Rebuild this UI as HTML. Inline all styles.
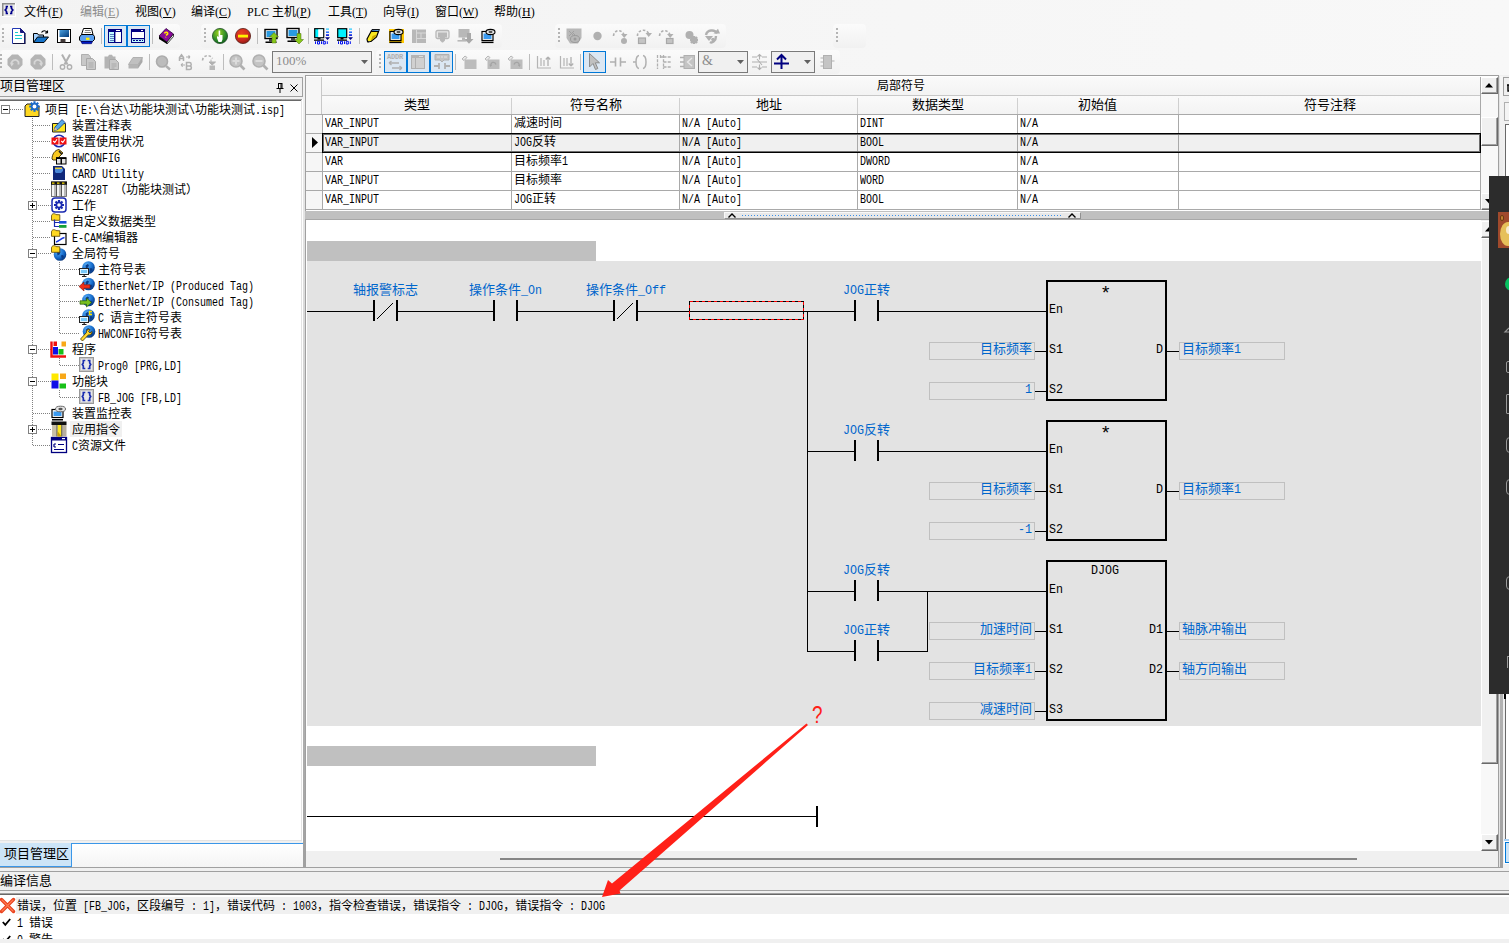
<!DOCTYPE html>
<html lang="zh-CN"><head><meta charset="utf-8"><title>ISPSoft</title>
<style>
html,body{margin:0;padding:0}
body{width:1509px;height:943px;overflow:hidden;background:#f0f0f0;position:relative;
 font-family:"Liberation Mono","Noto Sans CJK SC",monospace;font-size:12px;color:#000}
.a{position:absolute;box-sizing:border-box}
.t{position:absolute;white-space:nowrap;font-family:"Liberation Mono","Noto Sans CJK SC",monospace;font-size:12px;line-height:16px;color:#000}
.t13{font-size:13px}
.l,.l13{display:inline-block;white-space:pre;transform-origin:0 50%}
.l{transform:scaleX(.83333)}
.l13{transform:scaleX(.89744)}
.m{position:absolute;white-space:nowrap;font-family:"Liberation Serif","Noto Sans CJK SC",serif;font-size:12px;line-height:16px;color:#000}
.m u{text-decoration:underline}
.b{color:#0066cc}
svg{overflow:visible}
</style></head>
<body>
<div class="a" style="left:0px;top:0px;width:1509px;height:75px;background:linear-gradient(to right,#f3f3f3,#f8f8f8);"></div>
<svg class="a" style="left:2px;top:3px;" width="14" height="14" viewBox="0 0 14 14"><rect x="0" y="0" width="14" height="14" fill="#fff"/><rect x="0" y="0" width="13" height="13" fill="#8c8c8c"/><rect x="1.5" y="1.5" width="11.5" height="11.5" fill="#e9e9e9"/><path d="M6 3.5H4.5V5.5L3.2 7L4.5 8.5V10.5H6" fill="none" stroke="#00008c" stroke-width="1.7"/><path d="M8 3.5H9.5V5.5L10.8 7L9.5 8.5V10.5H8" fill="none" stroke="#00008c" stroke-width="1.7"/></svg>
<div class="m" style="left:24px;top:4px;color:#000">文件(<u>F</u>)</div>
<div class="m" style="left:80px;top:4px;color:#8c8c8c">编辑(<u>E</u>)</div>
<div class="m" style="left:135px;top:4px;color:#000">视图(<u>V</u>)</div>
<div class="m" style="left:191px;top:4px;color:#000">编译(<u>C</u>)</div>
<div class="m" style="left:247px;top:4px;color:#000">PLC 主机(<u>P</u>)</div>
<div class="m" style="left:328px;top:4px;color:#000">工具(<u>T</u>)</div>
<div class="m" style="left:383px;top:4px;color:#000">向导(<u>I</u>)</div>
<div class="m" style="left:435px;top:4px;color:#000">窗口(<u>W</u>)</div>
<div class="m" style="left:494px;top:4px;color:#000">帮助(<u>H</u>)</div>
<div class="a" style="left:0px;top:24px;width:180px;height:24px;background:linear-gradient(#fbfbfb,#f1f1f1);border-radius:4px;"></div>
<div class="a" style="left:201px;top:24px;width:301px;height:24px;background:linear-gradient(#fbfbfb,#f1f1f1);border-radius:4px;"></div>
<div class="a" style="left:555px;top:24px;width:171px;height:24px;background:linear-gradient(#fbfbfb,#f1f1f1);border-radius:4px;"></div>
<div class="a" style="left:833px;top:24px;width:33px;height:24px;background:linear-gradient(#fbfbfb,#f1f1f1);border-radius:4px;"></div>
<div class="a" style="left:0px;top:50px;width:374px;height:24px;background:linear-gradient(#fbfbfb,#f1f1f1);border-radius:4px;"></div>
<div class="a" style="left:376px;top:50px;width:464px;height:24px;background:linear-gradient(#fbfbfb,#f1f1f1);border-radius:4px;"></div>
<div class="a" style="left:2px;top:28px;width:2px;height:2px;background:#b4b4b4;"></div>
<div class="a" style="left:2px;top:32px;width:2px;height:2px;background:#b4b4b4;"></div>
<div class="a" style="left:2px;top:36px;width:2px;height:2px;background:#b4b4b4;"></div>
<div class="a" style="left:2px;top:40px;width:2px;height:2px;background:#b4b4b4;"></div>
<div class="a" style="left:204px;top:28px;width:2px;height:2px;background:#b4b4b4;"></div>
<div class="a" style="left:204px;top:32px;width:2px;height:2px;background:#b4b4b4;"></div>
<div class="a" style="left:204px;top:36px;width:2px;height:2px;background:#b4b4b4;"></div>
<div class="a" style="left:204px;top:40px;width:2px;height:2px;background:#b4b4b4;"></div>
<div class="a" style="left:558px;top:28px;width:2px;height:2px;background:#b4b4b4;"></div>
<div class="a" style="left:558px;top:32px;width:2px;height:2px;background:#b4b4b4;"></div>
<div class="a" style="left:558px;top:36px;width:2px;height:2px;background:#b4b4b4;"></div>
<div class="a" style="left:558px;top:40px;width:2px;height:2px;background:#b4b4b4;"></div>
<div class="a" style="left:836px;top:28px;width:2px;height:2px;background:#b4b4b4;"></div>
<div class="a" style="left:836px;top:32px;width:2px;height:2px;background:#b4b4b4;"></div>
<div class="a" style="left:836px;top:36px;width:2px;height:2px;background:#b4b4b4;"></div>
<div class="a" style="left:836px;top:40px;width:2px;height:2px;background:#b4b4b4;"></div>
<div class="a" style="left:0px;top:54px;width:2px;height:2px;background:#b4b4b4;"></div>
<div class="a" style="left:0px;top:58px;width:2px;height:2px;background:#b4b4b4;"></div>
<div class="a" style="left:0px;top:62px;width:2px;height:2px;background:#b4b4b4;"></div>
<div class="a" style="left:0px;top:66px;width:2px;height:2px;background:#b4b4b4;"></div>
<div class="a" style="left:379px;top:54px;width:2px;height:2px;background:#b4b4b4;"></div>
<div class="a" style="left:379px;top:58px;width:2px;height:2px;background:#b4b4b4;"></div>
<div class="a" style="left:379px;top:62px;width:2px;height:2px;background:#b4b4b4;"></div>
<div class="a" style="left:379px;top:66px;width:2px;height:2px;background:#b4b4b4;"></div>
<div class="a" style="left:101px;top:28px;width:1px;height:16px;background:#bdbdbd;"></div>
<div class="a" style="left:152px;top:28px;width:1px;height:16px;background:#bdbdbd;"></div>
<div class="a" style="left:257px;top:28px;width:1px;height:16px;background:#bdbdbd;"></div>
<div class="a" style="left:308px;top:28px;width:1px;height:16px;background:#bdbdbd;"></div>
<div class="a" style="left:359px;top:28px;width:1px;height:16px;background:#bdbdbd;"></div>
<div class="a" style="left:52px;top:54px;width:1px;height:16px;background:#bdbdbd;"></div>
<div class="a" style="left:149px;top:54px;width:1px;height:16px;background:#bdbdbd;"></div>
<div class="a" style="left:223px;top:54px;width:1px;height:16px;background:#bdbdbd;"></div>
<div class="a" style="left:455px;top:54px;width:1px;height:16px;background:#bdbdbd;"></div>
<div class="a" style="left:529px;top:54px;width:1px;height:16px;background:#bdbdbd;"></div>
<div class="a" style="left:580px;top:54px;width:1px;height:16px;background:#bdbdbd;"></div>
<div class="a" style="left:104px;top:25px;width:23px;height:22px;background:#dbe7f3;border:1px solid #0078d7;"></div>
<div class="a" style="left:127px;top:25px;width:23px;height:22px;background:#dbe7f3;border:1px solid #0078d7;"></div>
<div class="a" style="left:384px;top:51px;width:23px;height:22px;background:#dbe7f3;border:1px solid #0078d7;"></div>
<div class="a" style="left:407px;top:51px;width:23px;height:22px;background:#dbe7f3;border:1px solid #0078d7;"></div>
<div class="a" style="left:430px;top:51px;width:23px;height:22px;background:#dbe7f3;border:1px solid #0078d7;"></div>
<div class="a" style="left:583px;top:51px;width:23px;height:22px;background:#dbe7f3;border:1px solid #0078d7;"></div>
<svg class="a" style="left:11px;top:28px;" width="16" height="16" viewBox="0 0 16 16"><path d="M1.5 0.5H9.5L13.5 4.5V15.5H1.5Z" fill="#fff" stroke="#2138b4"/><path d="M9.5 0.5V4.5H13.5Z" fill="#1a1a80" stroke="#1a1a80"/><path d="M2 15.5H14V5" fill="none" stroke="#101040" stroke-width="1.2"/><path d="M4 4.5H7M4 7.5H11M4 10.5H11" stroke="#18c8d0" stroke-width="1" shape-rendering="crispEdges"/></svg>
<svg class="a" style="left:33px;top:28px;" width="16" height="16" viewBox="0 0 16 16"><path d="M0.5 14.5V5.5H4.5L5.5 7H10.5V9" fill="#a8d4ff" stroke="#000"/><path d="M0.5 14.5L4.5 9H15.5L11 14.5Z" fill="#1472c8" stroke="#000"/><path d="M8.5 4.5C10 2 13 2 14.5 5M14.5 5V2.5M14.5 5H12" fill="none" stroke="#000" stroke-width="1.1"/></svg>
<svg class="a" style="left:56px;top:28px;" width="16" height="16" viewBox="0 0 16 16"><rect x="1.5" y="1.5" width="13" height="13" fill="#fff" stroke="#000" stroke-width="1"/><defs><linearGradient id="gsv" x1="0" y1="0" x2="1" y2="1"><stop offset="0" stop-color="#4aa0e0"/><stop offset="1" stop-color="#003878"/></linearGradient></defs><rect x="3.5" y="2" width="9.5" height="7" fill="url(#gsv)"/><rect x="4.5" y="11" width="5" height="3.5" fill="#403838"/></svg>
<svg class="a" style="left:79px;top:28px;" width="16" height="16" viewBox="0 0 16 16"><path d="M4.5 0.5H12.5L14 6.5H2.5Z" fill="#fff" stroke="#000"/><path d="M6 2.5H11.5M5.5 4.5H12" stroke="#808080"/><path d="M0.5 9L2.5 6.5H14L15.5 8.5V11.5L13.5 13.5H2L0.5 12Z" fill="#5aa0f0" stroke="#000"/><path d="M2 13.5H13.5L12.5 15.7H3Z" fill="#0018c8" stroke="#000060" stroke-width="0.6"/><rect x="7" y="9.7" width="3.5" height="2.2" fill="#ffee00"/></svg>
<svg class="a" style="left:108px;top:29px;" width="14" height="14" viewBox="0 0 14 14"><rect x="0.5" y="0.5" width="13" height="13" fill="#fff" stroke="#000080"/><rect x="0" y="0" width="14" height="3" fill="#000080"/><rect x="8" y="1" width="4" height="1" fill="#fff"/><rect x="1" y="3" width="5" height="10" fill="#bffcff"/><rect x="6" y="3" width="1.4" height="10" fill="#000080"/><path d="M2.5 5.5H3.5M4.5 5.5H5.5M2.5 7.5H3.5M4.5 7.5H5.5M2.5 9.5H3.5M4.5 9.5H5.5M2.5 11.5H3.5M4.5 11.5H5.5" stroke="#000080"/></svg>
<svg class="a" style="left:131px;top:29px;" width="14" height="14" viewBox="0 0 14 14"><rect x="0.5" y="0.5" width="13" height="13" fill="#fff" stroke="#000080"/><rect x="0" y="0" width="14" height="3" fill="#000080"/><rect x="10" y="1" width="2" height="1" fill="#fff"/><rect x="1" y="10" width="12" height="3" fill="#bffcff"/><rect x="1" y="9" width="12" height="1.2" fill="#000080"/><path d="M2 11.5H4M5 11.5H7M8 11.5H10M11 11.5H12" stroke="#000080"/></svg>
<svg class="a" style="left:158px;top:28px;" width="16" height="16" viewBox="0 0 16 16"><path d="M1 8L8 0.5L15.5 6L9 14Z" fill="#8a0a9a" stroke="#300040" stroke-width="0.8"/><path d="M1 8V11L9 16V14Z" fill="#000"/><path d="M9 14L15.5 6V8.5L9 16Z" fill="#e8e8e8" stroke="#000" stroke-width="0.7"/><path d="M6.5 5.5C7 3.5 10.5 4 9.5 6.2L8 7.3M7.5 9.3L7.8 8.8" fill="none" stroke="#ffe800" stroke-width="1.6"/></svg>
<svg class="a" style="left:212px;top:28px;" width="16" height="16" viewBox="0 0 16 16"><defs><radialGradient id="ggr" cx="0.4" cy="0.3" r="0.8"><stop offset="0" stop-color="#9ad020"/><stop offset="0.6" stop-color="#2a8a28"/><stop offset="1" stop-color="#0a4a18"/></radialGradient></defs><circle cx="8" cy="8" r="7.6" fill="url(#ggr)" stroke="#24502a" stroke-width="0.8"/><path d="M6.6 2.5H8.2V7H10.5V11.5L9.5 14H6.5L5 10V8L6.6 9Z" fill="#fff"/></svg>
<svg class="a" style="left:235px;top:28px;" width="16" height="16" viewBox="0 0 16 16"><defs><radialGradient id="grd" cx="0.4" cy="0.3" r="0.8"><stop offset="0" stop-color="#e84020"/><stop offset="0.6" stop-color="#c82820"/><stop offset="1" stop-color="#7a1810"/></radialGradient></defs><circle cx="8" cy="8" r="7.6" fill="url(#grd)" stroke="#5a2018" stroke-width="0.8"/><rect x="3" y="6.7" width="10" height="2.8" fill="#fff000"/></svg>
<svg class="a" style="left:264px;top:28px;" width="16" height="16" viewBox="0 0 16 16"><rect x="1" y="1.5" width="12" height="9" fill="#fff" stroke="#000" stroke-width="1.4"/><rect x="2.5" y="3" width="9" height="6" fill="#2a9ae0"/><path d="M5 11H9V13.5H5Z" fill="#444"/><rect x="1.5" y="13.5" width="11" height="1.5" fill="#000"/><path d="M10 4.5L14.5 9H12V15H8V9H5.5Z" fill="#88c818" stroke="#486c10" stroke-width="0.5"/></svg>
<svg class="a" style="left:286px;top:27px;" width="16" height="16" viewBox="0 0 16 16"><rect x="1" y="1.5" width="12" height="9" fill="#fff" stroke="#000" stroke-width="1.4"/><rect x="2.5" y="3" width="9" height="6" fill="#2a9ae0"/><path d="M5 11H9V13.5H5Z" fill="#444"/><rect x="1.5" y="13.5" width="11" height="1.5" fill="#000"/><path d="M13 17L17.5 12.5H15V6.5H11V12.5H8.5Z" fill="#88c818" stroke="#486c10" stroke-width="0.5"/></svg>
<svg class="a" style="left:314px;top:28px;" width="16" height="16" viewBox="0 0 16 16"><rect x="0.7" y="0.7" width="9" height="9" fill="#00f0ff" stroke="#000" stroke-width="1.2"/><rect x="4.2" y="1.3" width="4.9" height="7.8" fill="#fff"/><path d="M3.5 10H6.5V11.5H3.5Z" fill="#000"/><rect x="0" y="11.5" width="10" height="1.3" fill="#000"/><rect x="12" y="0.5" width="3" height="1.2" fill="#20c8ff"/><rect x="12" y="3.5" width="3" height="1.4" fill="#1060ff"/><rect x="12" y="6.3" width="3" height="1.6" fill="#0018e0"/><path d="M11 9.3H16L13.5 12Z" fill="#000080"/><path d="M1.5 13.3V16M3.5 13.3H5.5V16H3.5ZM7.5 13.3V16M9.3 13.3H11.3V16H9.3ZM13.3 13.3V16" fill="none" stroke="#0010f0" stroke-width="1"/></svg>
<svg class="a" style="left:337px;top:28px;" width="16" height="16" viewBox="0 0 16 16"><rect x="0.7" y="0.7" width="9" height="9" fill="#00f0ff" stroke="#000" stroke-width="1.2"/><path d="M3.5 10H6.5V11.5H3.5Z" fill="#000"/><rect x="0" y="11.5" width="10" height="1.3" fill="#000"/><rect x="12" y="0.5" width="3" height="1.2" fill="#20c8ff"/><rect x="12" y="3.5" width="3" height="1.4" fill="#1060ff"/><rect x="12" y="6.3" width="3" height="1.6" fill="#0018e0"/><path d="M11 9.3H16L13.5 12Z" fill="#000080"/><path d="M1.5 13.3V16M3.5 13.3H5.5V16H3.5ZM7.5 13.3V16M9.3 13.3H11.3V16H9.3ZM13.3 13.3V16" fill="none" stroke="#0010f0" stroke-width="1"/></svg>
<svg class="a" style="left:366px;top:28px;" width="16" height="16" viewBox="0 0 16 16"><path d="M5 3L6 1.5H13.5L12.5 3.5Z" fill="#58a8f0" stroke="#000" stroke-width="0.9"/><path d="M5 3.5H12.5L10.5 9L5 13.5H1.5L1 11Z" fill="#f8e820" stroke="#000" stroke-width="1.2"/><path d="M6.5 8L10.5 6.5L9.5 9L5 12.5Z" fill="#c8a800"/><path d="M1.5 14.5L4 13.5" stroke="#444" stroke-width="1.3"/></svg>
<svg class="a" style="left:389px;top:28px;" width="16" height="16" viewBox="0 0 16 16"><rect x="0" y="1" width="15" height="14" fill="#ffc800"/><rect x="1" y="3.5" width="11" height="9" fill="#fff" stroke="#000" stroke-width="1.2"/><rect x="2.5" y="5.5" width="8" height="5.5" fill="#3a9af0"/><ellipse cx="9.5" cy="4" rx="4.5" ry="2.6" fill="#e8e8e8" stroke="#000" stroke-width="1.1"/><ellipse cx="9.5" cy="4" rx="2" ry="1.2" fill="#555"/><rect x="0.5" y="13.7" width="12" height="1.4" fill="#000"/></svg>
<svg class="a" style="left:481px;top:28px;" width="16" height="16" viewBox="0 0 16 16"><rect x="1" y="3.5" width="11" height="9" fill="#fff" stroke="#000" stroke-width="1.2"/><rect x="2.5" y="5.5" width="8" height="5.5" fill="#3a9af0"/><ellipse cx="9.5" cy="4" rx="4.5" ry="2.6" fill="#e8e8e8" stroke="#000" stroke-width="1.1"/><ellipse cx="9.5" cy="4" rx="2" ry="1.2" fill="#555"/><rect x="0.5" y="13.7" width="12" height="1.4" fill="#000"/></svg>
<svg class="a" style="left:412px;top:28px;" width="16" height="16" viewBox="0 0 16 16"><rect x="0" y="1.5" width="14" height="13.5" fill="#b8b8b8"/><path d="M4.5 1.5V15M4.5 5H14M4.5 10.5H14M9 5V10.5" stroke="#d8d8d8" stroke-width="1"/></svg>
<svg class="a" style="left:435px;top:28px;" width="16" height="16" viewBox="0 0 16 16"><rect x="1" y="2.5" width="13" height="8" rx="1.5" fill="#e8e8e8" stroke="#b8b8b8" stroke-width="1.3"/><path d="M3 4.5H12V9.5H10V12.5L8 14.5H7L5 12.5V9.5H3Z" fill="#b8b8b8"/></svg>
<svg class="a" style="left:457px;top:28px;" width="16" height="16" viewBox="0 0 16 16"><rect x="1.5" y="1" width="11" height="8.5" fill="#b8b8b8"/><path d="M5 9.5H8V12H5Z" fill="#b8b8b8"/><rect x="0.5" y="12" width="9" height="1.6" fill="#b8b8b8"/><path d="M10 5H14V11H16.5L12 15.8L7.5 11H10Z" fill="#a8a8a8"/></svg>
<svg class="a" style="left:566px;top:28px;" width="16" height="16" viewBox="0 0 16 16"><path d="M0.5 0.5H15.5V10L12 15.5H4L0.5 10Z" fill="#b8b8b8"/><ellipse cx="9" cy="11" rx="4.5" ry="3.5" fill="none" stroke="#9a9a9a" stroke-width="1"/><circle cx="9" cy="11" r="1.5" fill="#9a9a9a"/><path d="M3 3L8 8M8 3L3 8M6 4L10 8" stroke="#a0a0a0" stroke-width="1"/></svg>
<svg class="a" style="left:590px;top:28px;" width="16" height="16" viewBox="0 0 16 16"><circle cx="7.5" cy="8" r="4.2" fill="#b0b0b0"/></svg>
<svg class="a" style="left:612px;top:28px;" width="16" height="16" viewBox="0 0 16 16"><path d="M1.5 8C2 2 9 0.5 12 6.5" fill="none" stroke="#b0b0b0" stroke-width="1.6" stroke-dasharray="2.5 1.8"/><path d="M9 6H15.5L12.2 10Z" fill="#b0b0b0"/><circle cx="12" cy="13" r="3" fill="#b0b0b0"/></svg>
<svg class="a" style="left:636px;top:28px;" width="16" height="16" viewBox="0 0 16 16"><path d="M1.5 8C1 2 10 0 12.5 5.5" fill="none" stroke="#b0b0b0" stroke-width="1.6" stroke-dasharray="2.5 1.8"/><path d="M9.5 5H16L12.7 9Z" fill="#b0b0b0"/><rect x="2.5" y="10" width="7" height="5.5" fill="#c4c4c4" stroke="#a8a8a8" stroke-width="1.2"/></svg>
<svg class="a" style="left:658px;top:28px;" width="16" height="16" viewBox="0 0 16 16"><path d="M1.5 8C2 2 9 0.5 12 6.5" fill="none" stroke="#b0b0b0" stroke-width="1.6" stroke-dasharray="2.5 1.8"/><path d="M9 6H15.5L12.2 10Z" fill="#b0b0b0"/><rect x="8.5" y="10.5" width="6.5" height="5" fill="#c4c4c4" stroke="#a8a8a8" stroke-width="1.2"/></svg>
<svg class="a" style="left:684px;top:28px;" width="16" height="16" viewBox="0 0 16 16"><circle cx="5.5" cy="7" r="4" fill="#b0b0b0"/><path d="M7 9L13 15M13 9L7 15M6 12H14M10 8V16" stroke="#b0b0b0" stroke-width="2.4"/></svg>
<svg class="a" style="left:704px;top:28px;" width="16" height="16" viewBox="0 0 16 16"><path d="M2 7C3 1.5 11 1 13 5.5" fill="none" stroke="#b0b0b0" stroke-width="2.4"/><path d="M9.5 5.5H16L14 0.8Z" fill="#b0b0b0"/><path d="M1 8H9L5 13Z" fill="#b0b0b0"/><path d="M12 8C12 13 8 15.5 6 14" fill="none" stroke="#b0b0b0" stroke-width="2.4"/><circle cx="9" cy="11.5" r="1.8" fill="#b0b0b0"/></svg>
<svg class="a" style="left:7px;top:54px;" width="16" height="16" viewBox="0 0 16 16"><path d="M5 0.5H11L15.5 5V11L11 15.5H5L0.5 11V5Z" fill="#b4b4b4"/><g><path d="M5 11C3 6.5 9 4 11.5 8V10.5" fill="none" stroke="#d6d6d6" stroke-width="1.8"/><path d="M3 8.5L7 9.5L4.5 12.5Z" fill="#d6d6d6"/></g></svg>
<svg class="a" style="left:30px;top:54px;" width="16" height="16" viewBox="0 0 16 16"><path d="M5 0.5H11L15.5 5V11L11 15.5H5L0.5 11V5Z" fill="#b4b4b4"/><g transform="translate(16,0) scale(-1,1)"><path d="M5 11C3 6.5 9 4 11.5 8V10.5" fill="none" stroke="#d6d6d6" stroke-width="1.8"/><path d="M3 8.5L7 9.5L4.5 12.5Z" fill="#d6d6d6"/></g></svg>
<svg class="a" style="left:58px;top:54px;" width="16" height="16" viewBox="0 0 16 16"><path d="M4 0.5L9.5 10.5M12 0.5L6.5 10.5" stroke="#b0b0b0" stroke-width="2"/><circle cx="4.5" cy="13" r="2.2" fill="none" stroke="#b0b0b0" stroke-width="1.4"/><circle cx="11.5" cy="13" r="2.2" fill="none" stroke="#b0b0b0" stroke-width="1.4"/></svg>
<svg class="a" style="left:81px;top:54px;" width="16" height="16" viewBox="0 0 16 16"><path d="M0.5 0.5H7.5L9.5 3V11.5H0.5Z" fill="#c8c8c8" stroke="#b0b0b0"/><path d="M5.5 4.5H11.5L14.5 7.5V15.5H5.5Z" fill="#c8c8c8" stroke="#a8a8a8"/><path d="M7.5 9H12.5M7.5 11H12.5M7.5 13H12.5" stroke="#aaa"/></svg>
<svg class="a" style="left:104px;top:54px;" width="16" height="16" viewBox="0 0 16 16"><path d="M0.5 2.5H4L5 0.8H8L9 2.5H11.5V14.5H0.5Z" fill="#b4b4b4"/><path d="M5.5 5.5H11.5L14.5 8.5V15.5H5.5Z" fill="#c8c8c8" stroke="#a8a8a8"/><path d="M7.5 10H12.5M7.5 12H12.5M7.5 14H10.5" stroke="#aaa"/></svg>
<svg class="a" style="left:127px;top:54px;" width="16" height="16" viewBox="0 0 16 16"><path d="M6 3.5H15.5L11 10.5H1.5Z" fill="#c0c0c0" stroke="#b0b0b0"/><path d="M1.5 10.5H11V14.5H1.5Z" fill="#b4b4b4"/><path d="M11 10.5L15.5 3.5V8L11 14.5Z" fill="#a8a8a8"/></svg>
<svg class="a" style="left:155px;top:54px;" width="16" height="16" viewBox="0 0 16 16"><circle cx="7" cy="7.5" r="5.5" fill="#bcbcbc" stroke="#acacac" stroke-width="1.6"/><path d="M11 12L15 15.5" stroke="#b0b0b0" stroke-width="2.4"/></svg>
<svg class="a" style="left:178px;top:54px;" width="16" height="16" viewBox="0 0 16 16"><path d="M1.5 7V3.5L3.5 0.8L5.5 3.5V7M1.5 4.5H5.5" fill="none" stroke="#b0b0b0" stroke-width="1.5"/><path d="M8 3H12M12 3L10.5 1.5M12 3L10.5 4.5" fill="none" stroke="#b0b0b0" stroke-width="1.1"/><path d="M8.5 8.5V15.5H11.5C14 15.5 14 12 11.5 12C14 12 13.5 8.5 11.5 8.5ZM8.5 12H11.5" fill="none" stroke="#b0b0b0" stroke-width="1.5"/><path d="M7 11L3 11M3 11L4.7 9.3M3 11L4.7 12.7" fill="none" stroke="#b0b0b0" stroke-width="1.1"/></svg>
<svg class="a" style="left:201px;top:54px;" width="16" height="16" viewBox="0 0 16 16"><path d="M1.5 6.5C2 1 9 0 11.5 4.5" fill="none" stroke="#b0b0b0" stroke-width="1.6" stroke-dasharray="2.5 1.8"/><path d="M10 5.5V9M8 8H14.5L11.2 11Z" fill="#b0b0b0" stroke="#b0b0b0"/><rect x="8.5" y="11.5" width="5.5" height="4.5" fill="#b8b8b8"/></svg>
<svg class="a" style="left:229px;top:54px;" width="16" height="16" viewBox="0 0 16 16"><circle cx="7" cy="7" r="6" fill="#c4c4c4" stroke="#b0b0b0" stroke-width="1.6"/><path d="M11.5 11.5L15.5 15.5" stroke="#b0b0b0" stroke-width="2.6"/><path d="M3.5 7H10.5" stroke="#dcdcdc" stroke-width="2"/><path d="M7 3.5V10.5" stroke="#dcdcdc" stroke-width="2"/></svg>
<svg class="a" style="left:252px;top:54px;" width="16" height="16" viewBox="0 0 16 16"><circle cx="7" cy="7" r="6" fill="#c4c4c4" stroke="#b0b0b0" stroke-width="1.6"/><path d="M11.5 11.5L15.5 15.5" stroke="#b0b0b0" stroke-width="2.6"/><path d="M3.5 7H10.5" stroke="#dcdcdc" stroke-width="2"/></svg>
<div class="a" style="left:387px;top:53px;font:bold 7px/8px 'Liberation Mono',monospace;color:#b0b0b0;letter-spacing:-0.2px">ADDR</div>
<svg class="a" style="left:388px;top:60px;" width="16" height="12" viewBox="0 0 16 12"><path d="M1 3H11M1 3L3.5 1M1 3L3.5 5M14 8H4M14 8L11.5 6M14 8L11.5 10" fill="none" stroke="#b0b0b0" stroke-width="1.4"/></svg>
<svg class="a" style="left:411px;top:55px;" width="14" height="14" viewBox="0 0 14 14"><rect x="0.5" y="0.5" width="13" height="13" fill="#d0d0d0" stroke="#b0b0b0"/><rect x="0" y="0" width="14" height="3" fill="#b4b4b4"/><path d="M4.5 3V14" stroke="#b0b0b0"/><rect x="8" y="1" width="4" height="1" fill="#ddd"/></svg>
<svg class="a" style="left:434px;top:54px;" width="16" height="16" viewBox="0 0 16 16"><path d="M1 0.5H15V6H10L8 8L6 6H1Z" fill="#c4c4c4" stroke="#b0b0b0"/><path d="M3 3H6M7 3H9M10 3H13" stroke="#e4e4e4"/><path d="M0 12H5M11 12H16M5 9V15M11 9V15" stroke="#b0b0b0" stroke-width="1.8"/></svg>
<svg class="a" style="left:461px;top:54px;" width="16" height="16" viewBox="0 0 16 16"><rect x="3.5" y="5.5" width="12" height="9.5" fill="#bcbcbc"/><path d="M1 5L4 2L6 3.5L3 6.5Z" fill="#e8e8e8" stroke="#b0b0b0" stroke-width="0.9"/></svg>
<svg class="a" style="left:484px;top:54px;" width="16" height="16" viewBox="0 0 16 16"><rect x="3.5" y="5.5" width="12" height="9.5" fill="#bcbcbc"/><path d="M1 5L4 2L6 3.5L3 6.5Z" fill="#e8e8e8" stroke="#b0b0b0" stroke-width="0.9"/><path d="M7 12C6 8 11 7 12 10.5" fill="none" stroke="#a4a4a4" stroke-width="1.3"/><path d="M5.3 10.5L8 11L6.5 13Z" fill="#a4a4a4"/></svg>
<svg class="a" style="left:507px;top:54px;" width="16" height="16" viewBox="0 0 16 16"><rect x="3.5" y="5.5" width="12" height="9.5" fill="#bcbcbc"/><path d="M1 5L4 2L6 3.5L3 6.5Z" fill="#e8e8e8" stroke="#b0b0b0" stroke-width="0.9"/><path d="M12 12C13 8 8 7 7 10.5" fill="none" stroke="#a4a4a4" stroke-width="1.3"/><path d="M13.7 10.5L11 11L12.5 13Z" fill="#a4a4a4"/></svg>
<svg class="a" style="left:536px;top:54px;" width="16" height="16" viewBox="0 0 16 16"><path d="M1.5 2V14H15" fill="none" stroke="#b4b4b4" stroke-width="1.2"/><path d="M5 4V12M8 6V12" stroke="#b4b4b4" stroke-width="1.2"/><path d="M12 12V3M12 3L9.8 5.5M12 3L14.2 5.5" fill="none" stroke="#b0b0b0" stroke-width="1.3"/></svg>
<svg class="a" style="left:559px;top:54px;" width="16" height="16" viewBox="0 0 16 16"><path d="M1.5 2V14H15" fill="none" stroke="#b4b4b4" stroke-width="1.2"/><path d="M5 4V12M8 4V12" stroke="#b4b4b4" stroke-width="1.2"/><path d="M12 3V12M12 12L9.8 9.5M12 12L14.2 9.5" fill="none" stroke="#b0b0b0" stroke-width="1.3"/></svg>
<svg class="a" style="left:588px;top:53px;" width="13" height="18" viewBox="0 0 13 18"><path d="M1.5 0.5V14L5 10.5L7.5 16.5L9.8 15.5L7.3 9.8H11.5Z" fill="#c0c0c0" stroke="#8c8c8c" stroke-width="1"/></svg>
<svg class="a" style="left:610px;top:54px;" width="16" height="16" viewBox="0 0 16 16"><path d="M0 8H5.5M10.5 8H16M5.5 3.5V12.5M10.5 3.5V12.5" stroke="#b0b0b0" stroke-width="1.6"/></svg>
<svg class="a" style="left:633px;top:54px;" width="16" height="16" viewBox="0 0 16 16"><path d="M0 8H3M6 1.5C3 2 3 5 3 8S3 14 6 14.5M10 1.5C13 2 13 5 13 8S13 14 10 14.5" fill="none" stroke="#b0b0b0" stroke-width="1.5"/></svg>
<svg class="a" style="left:656px;top:54px;" width="16" height="16" viewBox="0 0 16 16"><path d="M1.5 1V15M4.5 1V5M7.5 1V15M4.5 3H7.5M7.5 3H15M7.5 8H15M7.5 13H15" fill="none" stroke="#b0b0b0" stroke-width="1.3" stroke-dasharray="3 1.2"/></svg>
<svg class="a" style="left:679px;top:54px;" width="16" height="16" viewBox="0 0 16 16"><rect x="5" y="1.5" width="10.5" height="13" fill="#c4c4c4" stroke="#b0b0b0"/><path d="M1 3.5H5M1 8H5M1 12.5H5" stroke="#b0b0b0" stroke-width="1.4"/><path d="M13 4L8.5 8L13 12" fill="none" stroke="#e8e8e8" stroke-width="1.4"/></svg>
<svg class="a" style="left:752px;top:54px;" width="16" height="16" viewBox="0 0 16 16"><path d="M0 3H5M10 3H15M0 8H15M0 13H5M10 13H15" stroke="#b0b0b0" stroke-width="1.2"/><path d="M7.5 0.5V5.5M7.5 10.5V15.5M5.5 2.5L7.5 0.5L9.5 2.5M5.5 13.5L7.5 15.5L9.5 13.5M5 5L10 11" fill="none" stroke="#b0b0b0" stroke-width="1.1"/></svg>
<svg class="a" style="left:820px;top:54px;" width="16" height="16" viewBox="0 0 16 16"><rect x="3.5" y="1.5" width="8" height="13" fill="#c4c4c4" stroke="#b0b0b0"/><path d="M0.5 4H3.5M0.5 8H3.5M0.5 12H3.5M11.5 7H14.5" stroke="#b0b0b0" stroke-width="1.2"/></svg>
<div class="a" style="left:272px;top:51px;width:100px;height:22px;background:#f0f0f0;border:1px solid #7a7a7a;"></div>
<svg class="a" style="left:361px;top:60px;" width="7" height="4" viewBox="0 0 7 4"><path d="M0 0H7L3.5 4Z" fill="#606060"/></svg>
<div class="m" style="left:276px;top:53px;color:#8c8c8c;font-size:13px">100%</div>
<div class="a" style="left:698px;top:51px;width:50px;height:22px;background:#f0f0f0;border:1px solid #7a7a7a;"></div>
<svg class="a" style="left:737px;top:60px;" width="7" height="4" viewBox="0 0 7 4"><path d="M0 0H7L3.5 4Z" fill="#606060"/></svg>
<div class="m" style="left:702px;top:53px;color:#8c8c8c;font-size:14px">&amp;</div>
<div class="a" style="left:771px;top:51px;width:44px;height:22px;background:#f0f0f0;border:1px solid #7a7a7a;"></div>
<svg class="a" style="left:804px;top:60px;" width="7" height="4" viewBox="0 0 7 4"><path d="M0 0H7L3.5 4Z" fill="#606060"/></svg>
<svg class="a" style="left:774px;top:54px;" width="15" height="16" viewBox="0 0 15 16"><path d="M7.5 1V15M0 9.5H15M3 5.5L7.5 1L12 5.5" fill="none" stroke="#000080" stroke-width="2"/></svg>
<div class="a" style="left:0px;top:77px;width:303px;height:1px;background:#a0a0a0;"></div>
<div class="a" style="left:302px;top:77px;width:1px;height:20px;background:#a0a0a0;"></div>
<div class="a" style="left:0px;top:96px;width:303px;height:1px;background:#a0a0a0;"></div>
<div class="t t13" style="left:0px;top:79px;">项目管理区</div>
<svg class="a" style="left:276px;top:83px;" width="8" height="10" viewBox="0 0 8 10"><path d="M2 0.5H6M2.5 0.5V5.5M5 0V5.5M6 0V5.5M0.5 5.5H7.5M4 6V10" fill="none" stroke="#000" stroke-width="1"/></svg>
<svg class="a" style="left:290px;top:84px;" width="8" height="8" viewBox="0 0 8 8"><path d="M0.5 0.5L7.5 7.5M7.5 0.5L0.5 7.5" stroke="#000" stroke-width="1"/></svg>
<div class="a" style="left:0px;top:99px;width:303px;height:1px;background:#a0a0a0;"></div>
<div class="a" style="left:0px;top:100px;width:302px;height:1px;background:#696969;"></div>
<div class="a" style="left:0px;top:101px;width:301px;height:739px;background:#fff;"></div>
<div class="a" style="left:301px;top:100px;width:1px;height:741px;background:#e3e3e3;"></div>
<div class="a" style="left:302px;top:99px;width:1px;height:743px;background:#fff;"></div>
<div class="a" style="left:0px;top:840px;width:302px;height:1px;background:#e3e3e3;"></div>
<div class="a" style="left:32px;top:118px;width:1px;height:328px;background:repeating-linear-gradient(to bottom,#808080 0 1px,transparent 1px 2px);"></div>
<div class="a" style="left:59px;top:262px;width:1px;height:72px;background:repeating-linear-gradient(to bottom,#808080 0 1px,transparent 1px 2px);"></div>
<div class="a" style="left:59px;top:358px;width:1px;height:8px;background:repeating-linear-gradient(to bottom,#808080 0 1px,transparent 1px 2px);"></div>
<div class="a" style="left:59px;top:390px;width:1px;height:8px;background:repeating-linear-gradient(to bottom,#808080 0 1px,transparent 1px 2px);"></div>
<div class="a" style="left:10px;top:109px;width:14px;height:1px;background:repeating-linear-gradient(to right,#808080 0 1px,transparent 1px 2px);"></div>
<div class="a" style="left:1px;top:105px;width:9px;height:9px;background:#fff;border:1px solid #808080;"></div>
<div class="a" style="left:3px;top:109px;width:5px;height:1px;background:#000;"></div>
<div class="t" style="left:45px;top:103px;">项目<span class="l" style="margin-right:-6px"> [E:\</span>台达<span class="l" style="margin-right:-1.2px">\</span>功能块测试<span class="l" style="margin-right:-1.2px">\</span>功能块测试<span class="l" style="margin-right:-6px">.isp]</span></div>
<div class="a" style="left:33px;top:125px;width:18px;height:1px;background:repeating-linear-gradient(to right,#808080 0 1px,transparent 1px 2px);"></div>
<div class="t" style="left:72px;top:119px;">装置注释表</div>
<div class="a" style="left:33px;top:141px;width:18px;height:1px;background:repeating-linear-gradient(to right,#808080 0 1px,transparent 1px 2px);"></div>
<div class="t" style="left:72px;top:135px;">装置使用状况</div>
<div class="a" style="left:33px;top:157px;width:18px;height:1px;background:repeating-linear-gradient(to right,#808080 0 1px,transparent 1px 2px);"></div>
<div class="t" style="left:72px;top:151px;"><span class="l" style="margin-right:-9.6px">HWCONFIG</span></div>
<div class="a" style="left:33px;top:173px;width:18px;height:1px;background:repeating-linear-gradient(to right,#808080 0 1px,transparent 1px 2px);"></div>
<div class="t" style="left:72px;top:167px;"><span class="l" style="margin-right:-14.4px">CARD Utility</span></div>
<div class="a" style="left:33px;top:189px;width:18px;height:1px;background:repeating-linear-gradient(to right,#808080 0 1px,transparent 1px 2px);"></div>
<div class="t" style="left:72px;top:183px;"><span class="l" style="margin-right:-8.4px">AS228T </span>（功能块测试）</div>
<div class="a" style="left:38px;top:205px;width:13px;height:1px;background:repeating-linear-gradient(to right,#808080 0 1px,transparent 1px 2px);"></div>
<div class="a" style="left:28px;top:201px;width:9px;height:9px;background:#fff;border:1px solid #808080;"></div>
<div class="a" style="left:30px;top:205px;width:5px;height:1px;background:#000;"></div>
<div class="a" style="left:32px;top:203px;width:1px;height:5px;background:#000;"></div>
<div class="t" style="left:72px;top:199px;">工作</div>
<div class="a" style="left:33px;top:221px;width:18px;height:1px;background:repeating-linear-gradient(to right,#808080 0 1px,transparent 1px 2px);"></div>
<div class="t" style="left:72px;top:215px;">自定义数据类型</div>
<div class="a" style="left:33px;top:237px;width:18px;height:1px;background:repeating-linear-gradient(to right,#808080 0 1px,transparent 1px 2px);"></div>
<div class="t" style="left:72px;top:231px;"><span class="l" style="margin-right:-6px">E-CAM</span>编辑器</div>
<div class="a" style="left:38px;top:253px;width:13px;height:1px;background:repeating-linear-gradient(to right,#808080 0 1px,transparent 1px 2px);"></div>
<div class="a" style="left:28px;top:249px;width:9px;height:9px;background:#fff;border:1px solid #808080;"></div>
<div class="a" style="left:30px;top:253px;width:5px;height:1px;background:#000;"></div>
<div class="t" style="left:72px;top:247px;">全局符号</div>
<div class="a" style="left:60px;top:269px;width:19px;height:1px;background:repeating-linear-gradient(to right,#808080 0 1px,transparent 1px 2px);"></div>
<div class="t" style="left:98px;top:263px;">主符号表</div>
<div class="a" style="left:60px;top:285px;width:19px;height:1px;background:repeating-linear-gradient(to right,#808080 0 1px,transparent 1px 2px);"></div>
<div class="t" style="left:98px;top:279px;"><span class="l" style="margin-right:-31.2px">EtherNet/IP (Produced Tag)</span></div>
<div class="a" style="left:60px;top:301px;width:19px;height:1px;background:repeating-linear-gradient(to right,#808080 0 1px,transparent 1px 2px);"></div>
<div class="t" style="left:98px;top:295px;"><span class="l" style="margin-right:-31.2px">EtherNet/IP (Consumed Tag)</span></div>
<div class="a" style="left:60px;top:317px;width:19px;height:1px;background:repeating-linear-gradient(to right,#808080 0 1px,transparent 1px 2px);"></div>
<div class="t" style="left:98px;top:311px;"><span class="l" style="margin-right:-2.4px">C </span>语言主符号表</div>
<div class="a" style="left:60px;top:333px;width:19px;height:1px;background:repeating-linear-gradient(to right,#808080 0 1px,transparent 1px 2px);"></div>
<div class="t" style="left:98px;top:327px;"><span class="l" style="margin-right:-9.6px">HWCONFIG</span>符号表</div>
<div class="a" style="left:38px;top:349px;width:13px;height:1px;background:repeating-linear-gradient(to right,#808080 0 1px,transparent 1px 2px);"></div>
<div class="a" style="left:28px;top:345px;width:9px;height:9px;background:#fff;border:1px solid #808080;"></div>
<div class="a" style="left:30px;top:349px;width:5px;height:1px;background:#000;"></div>
<div class="t" style="left:72px;top:343px;">程序</div>
<div class="a" style="left:60px;top:365px;width:19px;height:1px;background:repeating-linear-gradient(to right,#808080 0 1px,transparent 1px 2px);"></div>
<div class="t" style="left:98px;top:359px;"><span class="l" style="margin-right:-16.8px">Prog0 [PRG,LD]</span></div>
<div class="a" style="left:38px;top:381px;width:13px;height:1px;background:repeating-linear-gradient(to right,#808080 0 1px,transparent 1px 2px);"></div>
<div class="a" style="left:28px;top:377px;width:9px;height:9px;background:#fff;border:1px solid #808080;"></div>
<div class="a" style="left:30px;top:381px;width:5px;height:1px;background:#000;"></div>
<div class="t" style="left:72px;top:375px;">功能块</div>
<div class="a" style="left:60px;top:397px;width:19px;height:1px;background:repeating-linear-gradient(to right,#808080 0 1px,transparent 1px 2px);"></div>
<div class="t" style="left:98px;top:391px;"><span class="l" style="margin-right:-16.8px">FB_JOG [FB,LD]</span></div>
<div class="a" style="left:33px;top:413px;width:18px;height:1px;background:repeating-linear-gradient(to right,#808080 0 1px,transparent 1px 2px);"></div>
<div class="t" style="left:72px;top:407px;">装置监控表</div>
<div class="a" style="left:38px;top:429px;width:13px;height:1px;background:repeating-linear-gradient(to right,#808080 0 1px,transparent 1px 2px);"></div>
<div class="a" style="left:28px;top:425px;width:9px;height:9px;background:#fff;border:1px solid #808080;"></div>
<div class="a" style="left:30px;top:429px;width:5px;height:1px;background:#000;"></div>
<div class="a" style="left:32px;top:427px;width:1px;height:5px;background:#000;"></div>
<div class="a" style="left:70px;top:421px;width:52px;height:16px;background:#f0f0f0;"></div>
<div class="t" style="left:72px;top:423px;">应用指令</div>
<div class="a" style="left:33px;top:445px;width:18px;height:1px;background:repeating-linear-gradient(to right,#808080 0 1px,transparent 1px 2px);"></div>
<div class="t" style="left:72px;top:439px;"><span class="l" style="margin-right:-1.2px">C</span>资源文件</div>
<svg class="a" style="left:24px;top:101px;" width="16" height="16" viewBox="0 0 16 16"><path d="M1 5L3 3H8V5H15V15.5H1Z" fill="#ffd820" stroke="#222" stroke-width="1"/><g transform="translate(10.5,5.5)"><path d="M0 -5.2V5.2M-5.2 0H5.2M-3.7 -3.7L3.7 3.7M3.7 -3.7L-3.7 3.7" stroke="#1a6ac8" stroke-width="2.2"/><circle r="3.6" fill="#1a6ac8"/><circle r="1.9" fill="#fff"/></g></svg>
<svg class="a" style="left:51px;top:117px;" width="16" height="16" viewBox="0 0 16 16"><path d="M1.5 6.5H14.5V15H1.5Z" fill="#ffe820" stroke="#222" stroke-width="1"/><path d="M3 13.5L4 10L11 2.5L14 5.5L7 12.5Z" fill="#58a8e8" stroke="#1a4a90" stroke-width="0.9"/><path d="M3 13.5L4 10.5L6.5 12.5Z" fill="#e8b890"/></svg>
<svg class="a" style="left:51px;top:133px;" width="16" height="16" viewBox="0 0 16 16"><circle cx="8" cy="8" r="5.8" fill="#fff" stroke="#1a2ab0" stroke-width="1.6"/><rect x="0.5" y="4.5" width="7" height="7" fill="#f01010"/><rect x="8.5" y="4.5" width="7" height="7" fill="#f01010"/><path d="M2.2 8L3.8 9.5L6 6.2M10.2 8L11.8 9.5L14 6.2" fill="none" stroke="#fff" stroke-width="1.1"/></svg>
<svg class="a" style="left:51px;top:149px;" width="16" height="16" viewBox="0 0 16 16"><path d="M1 10C1 5 4 1 8 0.5L12 4L8 8V11H2Z" fill="#f8c820" stroke="#3a2a00" stroke-width="0.9"/><path d="M8 2L11 5.5" stroke="#222" stroke-width="1.6"/><rect x="5.5" y="9.5" width="4.5" height="5.5" fill="#e4e4e4" stroke="#000"/><rect x="10.5" y="9.5" width="4.5" height="5.5" fill="#e4e4e4" stroke="#000"/><path d="M5 8.8H15.5" stroke="#000" stroke-width="1.4"/></svg>
<svg class="a" style="left:51px;top:165px;" width="16" height="16" viewBox="0 0 16 16"><path d="M2 1H11L14 4V15H2Z" fill="#10287a"/><path d="M4 3H11L12 4V6L10 8H5L4 7Z" fill="#4a88d8"/><rect x="4" y="2.5" width="7" height="1.5" fill="#e8d040"/></svg>
<svg class="a" style="left:51px;top:181px;" width="16" height="16" viewBox="0 0 16 16"><rect x="0.5" y="1" width="15" height="14.5" fill="#f4f4f4" stroke="#555" stroke-width="0.8"/><rect x="3" y="4" width="2" height="11" fill="#b8b8b8"/><rect x="8" y="4" width="2" height="11" fill="#b8b8b8"/><rect x="13" y="4" width="2" height="11" fill="#b8b8b8"/><path d="M5.5 1V15.5M10.5 1V15.5" stroke="#444" stroke-width="0.9"/><rect x="0" y="0.5" width="16" height="3.3" fill="#111"/><path d="M1 2.2H3.5M6 2.2H8.5M11 2.2H13.5" stroke="#ffe000" stroke-width="1.3"/></svg>
<svg class="a" style="left:51px;top:197px;" width="16" height="16" viewBox="0 0 16 16"><rect x="1" y="1" width="14" height="14" rx="3" fill="#fff" stroke="#1a2ab0" stroke-width="1.5"/><g transform="translate(8,8)"><path d="M0 -5V5M-5 0H5M-3.5 -3.5L3.5 3.5M3.5 -3.5L-3.5 3.5" stroke="#1a2ab0" stroke-width="2.2"/><circle r="3.5" fill="#1a2ab0"/><circle r="1.8" fill="#fff"/></g></svg>
<svg class="a" style="left:51px;top:213px;" width="16" height="16" viewBox="0 0 16 16"><path d="M0.5 3C0.5 0.5 3.5 0 5 1.6L8.8 1.8V7.3H0.5Z" fill="#ffd820" stroke="#5a4400" stroke-width="0.8"/><path d="M3.5 6.5V13.5H8M3.5 9.5H8" fill="none" stroke="#1a2ab0" stroke-width="1.2"/><rect x="8" y="8" width="7.5" height="2.6" fill="#1a50d8"/><rect x="8" y="12" width="7.5" height="2.8" fill="#18a038"/></svg>
<svg class="a" style="left:51px;top:229px;" width="16" height="16" viewBox="0 0 16 16"><rect x="3.5" y="4.5" width="11.5" height="11" fill="#fff" stroke="#000" stroke-width="1.2"/><path d="M5 13C8 12.5 10 9 13.5 8.5" fill="none" stroke="#1a3ae0" stroke-width="1.5"/><path d="M0.5 3C0.5 0.5 3.5 0 5 1.6L8.8 1.8V7.3H0.5Z" fill="#ffd820" stroke="#5a4400" stroke-width="0.8"/></svg>
<svg class="a" style="left:51px;top:245px;" width="16" height="16" viewBox="0 0 16 16"><defs><radialGradient id="gl1" cx="0.35" cy="0.3" r="0.8"><stop offset="0" stop-color="#58b0f8"/><stop offset="0.6" stop-color="#1468c8"/><stop offset="1" stop-color="#042868"/></radialGradient></defs><circle cx="9" cy="9.5" r="6.3" fill="url(#gl1)"/><path d="M6 7.5l2 -1.5l1.5 1l-1 2.5l-2 1zM10 10.5l2 -0.5l1 2l-2 2z" fill="#0a3c88"/><path d="M0.5 3C0.5 0.5 3.5 0 5 1.6L8.8 1.8V7.3H0.5Z" fill="#ffd820" stroke="#5a4400" stroke-width="0.8"/></svg>
<svg class="a" style="left:79px;top:261px;" width="16" height="16" viewBox="0 0 16 16"><defs><radialGradient id="gl2" cx="0.35" cy="0.3" r="0.8"><stop offset="0" stop-color="#58b0f8"/><stop offset="0.6" stop-color="#1468c8"/><stop offset="1" stop-color="#042868"/></radialGradient></defs><circle cx="9.5" cy="6.5" r="6.3" fill="url(#gl2)"/><path d="M6.5 4.5l2 -1.5l1.5 1l-1 2.5l-2 1zM10.5 7.5l2 -0.5l1 2l-2 2z" fill="#0a3c88"/><rect x="0.5" y="7.5" width="9" height="6" fill="#dff4ff" stroke="#222" stroke-width="1"/><rect x="2" y="9" width="6" height="3" fill="#78c8f8"/><path d="M3 15.5H7.5M5.2 13.5V15.5" stroke="#222" stroke-width="1.2"/></svg>
<svg class="a" style="left:79px;top:277px;" width="16" height="16" viewBox="0 0 16 16"><defs><radialGradient id="gl3" cx="0.35" cy="0.3" r="0.8"><stop offset="0" stop-color="#58b0f8"/><stop offset="0.6" stop-color="#1468c8"/><stop offset="1" stop-color="#042868"/></radialGradient></defs><circle cx="9.5" cy="7" r="6.3" fill="url(#gl3)"/><path d="M6.5 5l2 -1.5l1.5 1l-1 2.5l-2 1zM10.5 8l2 -0.5l1 2l-2 2z" fill="#0a3c88"/><path d="M0 9.5L5 5V7.8H11V11.2H5V14Z" fill="#f03018" stroke="#801008" stroke-width="0.6"/></svg>
<svg class="a" style="left:79px;top:293px;" width="16" height="16" viewBox="0 0 16 16"><defs><radialGradient id="gl4" cx="0.35" cy="0.3" r="0.8"><stop offset="0" stop-color="#58b0f8"/><stop offset="0.6" stop-color="#1468c8"/><stop offset="1" stop-color="#042868"/></radialGradient></defs><circle cx="9.5" cy="7" r="6.3" fill="url(#gl4)"/><path d="M6.5 5l2 -1.5l1.5 1l-1 2.5l-2 1zM10.5 8l2 -0.5l1 2l-2 2z" fill="#0a3c88"/><path d="M12.5 9.5L7.5 5V7.8H1V11.2H7.5V14Z" fill="#78c020" stroke="#2a5808" stroke-width="0.7"/></svg>
<svg class="a" style="left:79px;top:309px;" width="16" height="16" viewBox="0 0 16 16"><defs><radialGradient id="gl5" cx="0.35" cy="0.3" r="0.8"><stop offset="0" stop-color="#58b0f8"/><stop offset="0.6" stop-color="#1468c8"/><stop offset="1" stop-color="#042868"/></radialGradient></defs><circle cx="9.5" cy="6.5" r="6.3" fill="url(#gl5)"/><path d="M6.5 4.5l2 -1.5l1.5 1l-1 2.5l-2 1zM10.5 7.5l2 -0.5l1 2l-2 2z" fill="#0a3c88"/><rect x="0.5" y="7.5" width="9" height="6" fill="#dff4ff" stroke="#222" stroke-width="1"/><rect x="2" y="9" width="6" height="3" fill="#78c8f8"/><path d="M3 15.5H7.5M5.2 13.5V15.5" stroke="#222" stroke-width="1.2"/><path d="M13 2.5H10.5V5.5H13" fill="none" stroke="#ffe000" stroke-width="1.3"/></svg>
<svg class="a" style="left:79px;top:325px;" width="16" height="16" viewBox="0 0 16 16"><defs><radialGradient id="gl6" cx="0.35" cy="0.3" r="0.8"><stop offset="0" stop-color="#58b0f8"/><stop offset="0.6" stop-color="#1468c8"/><stop offset="1" stop-color="#042868"/></radialGradient></defs><circle cx="10" cy="6.5" r="6.3" fill="url(#gl6)"/><path d="M7 4.5l2 -1.5l1.5 1l-1 2.5l-2 1zM11 7.5l2 -0.5l1 2l-2 2z" fill="#0a3c88"/><path d="M1.5 14L7.5 7.5C7 5.5 9 3.8 11 4.5L9.5 6.5L11 8L13 6.5C13.5 8.5 11.5 10.5 9.5 9.8L3.5 16Z" fill="#ffd830" stroke="#4a3800" stroke-width="0.8"/></svg>
<svg class="a" style="left:51px;top:341px;" width="16" height="16" viewBox="0 0 16 16"><path d="M0.5 0.5V15.5H15" fill="none" stroke="#f01010" stroke-width="2.4"/><rect x="2" y="6" width="5" height="7.5" fill="#1010e8"/><rect x="7.5" y="8" width="5" height="5.5" fill="#18c018"/><rect x="10.5" y="0.5" width="4.5" height="5" fill="#f8a818"/><rect x="2.5" y="0.5" width="3.5" height="4.5" fill="#f01010"/></svg>
<svg class="a" style="left:79px;top:357px;" width="16" height="16" viewBox="0 0 16 16"><rect x="0.5" y="0.5" width="14" height="14" fill="#e8e8e8" stroke="#9a9a9a"/><rect x="1.5" y="1.5" width="12" height="12" fill="none" stroke="#c8c8c8"/><path d="M6.3 3.5H4.3V6L3.3 7.5L4.3 9V11.5H6.3M8.7 3.5H10.7V6L11.7 7.5L10.7 9V11.5H8.7" fill="none" stroke="#1c2fb0" stroke-width="1.7"/></svg>
<svg class="a" style="left:51px;top:373px;" width="16" height="16" viewBox="0 0 16 16"><rect x="0.5" y="0.5" width="7" height="7" fill="#ffe800"/><rect x="0.5" y="7.5" width="7" height="8" fill="#1010e8"/><rect x="9" y="0.5" width="6" height="5.5" fill="#f8a818"/><rect x="8.5" y="10.5" width="6.5" height="5" fill="#18c018"/></svg>
<svg class="a" style="left:79px;top:389px;" width="16" height="16" viewBox="0 0 16 16"><rect x="0.5" y="0.5" width="14" height="14" fill="#e8e8e8" stroke="#9a9a9a"/><rect x="1.5" y="1.5" width="12" height="12" fill="none" stroke="#c8c8c8"/><path d="M6.3 3.5H4.3V6L3.3 7.5L4.3 9V11.5H6.3M8.7 3.5H10.7V6L11.7 7.5L10.7 9V11.5H8.7" fill="none" stroke="#1c2fb0" stroke-width="1.7"/></svg>
<svg class="a" style="left:51px;top:405px;" width="16" height="16" viewBox="0 0 16 16"><rect x="1" y="4.5" width="11" height="8" fill="#fff" stroke="#000" stroke-width="1.2"/><rect x="2.5" y="6.5" width="8" height="4.5" fill="#3a9af0"/><ellipse cx="9.5" cy="4" rx="5" ry="2.8" fill="#e8e8e8" stroke="#666" stroke-width="1"/><ellipse cx="9.5" cy="4" rx="2.2" ry="1.3" fill="#555"/><rect x="1" y="14" width="11" height="1.5" fill="#000"/></svg>
<svg class="a" style="left:51px;top:421px;" width="16" height="16" viewBox="0 0 16 16"><rect x="0.5" y="0.5" width="15" height="3.5" fill="#111"/><rect x="1" y="4" width="5" height="11.5" fill="#c8c0a8"/><rect x="6.5" y="4" width="4" height="11.5" fill="#ffe820"/><rect x="11" y="4" width="4.5" height="11.5" fill="#b8b0a0"/><path d="M6 4V15.5M10.7 4V15.5" stroke="#333" stroke-width="0.8"/><path d="M6.5 10L10.5 15.5H6.5Z" fill="#c8a000"/></svg>
<svg class="a" style="left:51px;top:437px;" width="16" height="16" viewBox="0 0 16 16"><rect x="0.5" y="0.5" width="15" height="15" fill="#fff" stroke="#000080" stroke-width="1.3"/><rect x="0" y="0" width="16" height="3.5" fill="#000080"/><path d="M3 7V10M3 7H5M3 10H5M7 7.5H13M3 12.5H13" fill="none" stroke="#000080" stroke-width="1.2"/><rect x="11" y="1" width="3" height="1.2" fill="#fff"/></svg>
<div class="a" style="left:0px;top:843px;width:303px;height:1px;background:#3a96e8;"></div>
<div class="a" style="left:72px;top:844px;width:231px;height:23px;background:linear-gradient(#fff,#f4f4f4);"></div>
<div class="a" style="left:0px;top:843px;width:72px;height:24px;background:#cce4f7;border-right:1px solid #3a96e8;border-bottom:1px solid #3a96e8;"></div>
<div class="t t13" style="left:4px;top:847px;">项目管理区</div>
<div class="a" style="left:0px;top:867px;width:304px;height:1px;background:#a0a0a0;"></div>
<div class="a" style="left:303px;top:77px;width:2px;height:791px;background:linear-gradient(#f2f2f2,#a0a0a0);"></div>
<div class="a" style="left:305px;top:75px;width:1194px;height:136px;background:#fff;border:1px solid #a0a0a0;border-bottom:none;"></div>
<div class="a" style="left:306px;top:77px;width:16px;height:133px;background:#f6f6f6;"></div>
<div class="a" style="left:322px;top:77px;width:1159px;height:18px;background:linear-gradient(#fafafa,#f3f3f3);"></div>
<div class="a" style="left:322px;top:96px;width:1159px;height:18px;background:linear-gradient(#fafafa,#f3f3f3);"></div>
<div class="a" style="left:321px;top:77px;width:1px;height:38px;background:#c8c8c8;"></div>
<div class="a" style="left:322px;top:95px;width:1159px;height:1px;background:#c8c8c8;"></div>
<div class="a" style="left:322px;top:134px;width:1158px;height:18px;background:#f0f0f0;"></div>
<div class="a" style="left:306px;top:114px;width:1175px;height:1px;background:#a9a9a9;"></div>
<div class="a" style="left:306px;top:133px;width:1175px;height:1px;background:#a9a9a9;"></div>
<div class="a" style="left:306px;top:152px;width:1175px;height:1px;background:#a9a9a9;"></div>
<div class="a" style="left:306px;top:171px;width:1175px;height:1px;background:#a9a9a9;"></div>
<div class="a" style="left:306px;top:190px;width:1175px;height:1px;background:#a9a9a9;"></div>
<div class="a" style="left:306px;top:209px;width:1175px;height:1px;background:#a9a9a9;"></div>
<div class="a" style="left:322px;top:115px;width:1px;height:95px;background:#a9a9a9;"></div>
<div class="a" style="left:511px;top:115px;width:1px;height:95px;background:#a9a9a9;"></div>
<div class="a" style="left:679px;top:115px;width:1px;height:95px;background:#a9a9a9;"></div>
<div class="a" style="left:857px;top:115px;width:1px;height:95px;background:#a9a9a9;"></div>
<div class="a" style="left:1017px;top:115px;width:1px;height:95px;background:#a9a9a9;"></div>
<div class="a" style="left:1178px;top:115px;width:1px;height:95px;background:#a9a9a9;"></div>
<div class="a" style="left:1480px;top:77px;width:1px;height:133px;background:#a9a9a9;"></div>
<div class="a" style="left:511px;top:98px;width:1px;height:16px;background:#d0d0d0;"></div>
<div class="a" style="left:679px;top:98px;width:1px;height:16px;background:#d0d0d0;"></div>
<div class="a" style="left:857px;top:98px;width:1px;height:16px;background:#d0d0d0;"></div>
<div class="a" style="left:1017px;top:98px;width:1px;height:16px;background:#d0d0d0;"></div>
<div class="a" style="left:1178px;top:98px;width:1px;height:16px;background:#d0d0d0;"></div>
<div class="a" style="left:322px;top:133px;width:1159px;height:20px;border:1px solid #000;box-shadow:inset 0 0 0 1px #6e6e6e;"></div>
<svg class="a" style="left:312px;top:137px;" width="6" height="11" viewBox="0 0 6 11"><path d="M0 0L6 5.5L0 11Z" fill="#000"/></svg>
<div class="t" style="left:877px;top:79px;">局部符号</div>
<div class="t t13" style="left:404px;top:98px;">类型</div>
<div class="t t13" style="left:570px;top:98px;">符号名称</div>
<div class="t t13" style="left:756px;top:98px;">地址</div>
<div class="t t13" style="left:912px;top:98px;">数据类型</div>
<div class="t t13" style="left:1078px;top:98px;">初始值</div>
<div class="t t13" style="left:1304px;top:98px;">符号注释</div>
<div class="t" style="left:325px;top:116px;"><span class="l" style="margin-right:-10.8px">VAR_INPUT</span></div>
<div class="t" style="left:514px;top:116px;">减速时间</div>
<div class="t" style="left:682px;top:116px;"><span class="l" style="margin-right:-12px">N/A [Auto]</span></div>
<div class="t" style="left:860px;top:116px;"><span class="l" style="margin-right:-4.8px">DINT</span></div>
<div class="t" style="left:1020px;top:116px;"><span class="l" style="margin-right:-3.6px">N/A</span></div>
<div class="t" style="left:325px;top:135px;"><span class="l" style="margin-right:-10.8px">VAR_INPUT</span></div>
<div class="t" style="left:514px;top:135px;"><span class="l" style="margin-right:-3.6px">JOG</span>反转</div>
<div class="t" style="left:682px;top:135px;"><span class="l" style="margin-right:-12px">N/A [Auto]</span></div>
<div class="t" style="left:860px;top:135px;"><span class="l" style="margin-right:-4.8px">BOOL</span></div>
<div class="t" style="left:1020px;top:135px;"><span class="l" style="margin-right:-3.6px">N/A</span></div>
<div class="t" style="left:325px;top:154px;"><span class="l" style="margin-right:-3.6px">VAR</span></div>
<div class="t" style="left:514px;top:154px;">目标频率<span class="l" style="margin-right:-1.2px">1</span></div>
<div class="t" style="left:682px;top:154px;"><span class="l" style="margin-right:-12px">N/A [Auto]</span></div>
<div class="t" style="left:860px;top:154px;"><span class="l" style="margin-right:-6px">DWORD</span></div>
<div class="t" style="left:1020px;top:154px;"><span class="l" style="margin-right:-3.6px">N/A</span></div>
<div class="t" style="left:325px;top:173px;"><span class="l" style="margin-right:-10.8px">VAR_INPUT</span></div>
<div class="t" style="left:514px;top:173px;">目标频率</div>
<div class="t" style="left:682px;top:173px;"><span class="l" style="margin-right:-12px">N/A [Auto]</span></div>
<div class="t" style="left:860px;top:173px;"><span class="l" style="margin-right:-4.8px">WORD</span></div>
<div class="t" style="left:1020px;top:173px;"><span class="l" style="margin-right:-3.6px">N/A</span></div>
<div class="t" style="left:325px;top:192px;"><span class="l" style="margin-right:-10.8px">VAR_INPUT</span></div>
<div class="t" style="left:514px;top:192px;"><span class="l" style="margin-right:-3.6px">JOG</span>正转</div>
<div class="t" style="left:682px;top:192px;"><span class="l" style="margin-right:-12px">N/A [Auto]</span></div>
<div class="t" style="left:860px;top:192px;"><span class="l" style="margin-right:-4.8px">BOOL</span></div>
<div class="t" style="left:1020px;top:192px;"><span class="l" style="margin-right:-3.6px">N/A</span></div>
<div class="a" style="left:1481px;top:77px;width:17px;height:133px;background:#f8f8f8;"></div>
<div class="a" style="left:1481px;top:77px;width:17px;height:17px;background:#f0f0f0;border:1px solid;border-color:#fff #696969 #696969 #fff;box-shadow:inset -1px -1px 0 #a0a0a0;"></div>
<div class="a" style="left:1481px;top:193px;width:17px;height:17px;background:#f0f0f0;border:1px solid;border-color:#fff #696969 #696969 #fff;box-shadow:inset -1px -1px 0 #a0a0a0;"></div>
<div class="a" style="left:1481px;top:117px;width:17px;height:29px;background:#f0f0f0;border:1px solid;border-color:#fff #696969 #696969 #fff;box-shadow:inset -1px -1px 0 #a0a0a0;"></div>
<svg class="a" style="left:1485px;top:83px;" width="8" height="5" viewBox="0 0 8 5"><path d="M0 4.5L4 0L8 4.5Z" fill="#000"/></svg>
<svg class="a" style="left:1485px;top:199px;" width="8" height="5" viewBox="0 0 8 5"><path d="M0 0L4 4.5L8 0Z" fill="#000"/></svg>
<div class="a" style="left:305px;top:211px;width:1194px;height:9px;background:#c0c0c0;"></div>
<div class="a" style="left:305px;top:219px;width:1194px;height:1px;background:#a8a8a8;"></div>
<div class="a" style="left:724px;top:212px;width:357px;height:7px;background:#e8e8e8;border:1px solid #f8f8f8;border-right-color:#909090;border-bottom-color:#909090;"></div>
<div class="a" style="left:742px;top:215px;width:320px;height:1px;background:repeating-linear-gradient(to right,#3a8ee6 0 1px,transparent 1px 3px);"></div>
<svg class="a" style="left:728px;top:213px;" width="8" height="5" viewBox="0 0 8 5"><path d="M0.5 4.5L4 1L7.5 4.5" fill="none" stroke="#000" stroke-width="1.4"/></svg>
<svg class="a" style="left:1068px;top:213px;" width="8" height="5" viewBox="0 0 8 5"><path d="M0.5 4.5L4 1L7.5 4.5" fill="none" stroke="#000" stroke-width="1.4"/></svg>
<div class="a" style="left:305px;top:220px;width:1px;height:648px;background:#a0a0a0;"></div>
<div class="a" style="left:306px;top:220px;width:1175px;height:631px;background:#fff;"></div>
<div class="a" style="left:307px;top:241px;width:289px;height:20px;background:#c0c0c0;"></div>
<div class="a" style="left:307px;top:261px;width:1174px;height:465px;background:#e3e3e3;"></div>
<div class="a" style="left:307px;top:746px;width:289px;height:20px;background:#c0c0c0;"></div>
<div class="t t13 b" style="left:353px;top:283px;">轴报警标志</div>
<div class="t t13 b" style="left:469px;top:283px;">操作条件<span class="l13" style="margin-right:-2.4px">_On</span></div>
<div class="t t13 b" style="left:586px;top:283px;">操作条件<span class="l13" style="margin-right:-3.2px">_Off</span></div>
<div class="t t13 b" style="left:843px;top:283px;"><span class="l13" style="margin-right:-2.4px">JOG</span>正转</div>
<div class="t t13 b" style="left:843px;top:423px;"><span class="l13" style="margin-right:-2.4px">JOG</span>反转</div>
<div class="t t13 b" style="left:843px;top:563px;"><span class="l13" style="margin-right:-2.4px">JOG</span>反转</div>
<div class="t t13 b" style="left:843px;top:623px;"><span class="l13" style="margin-right:-2.4px">JOG</span>正转</div>
<div class="t" style="left:1100px;top:284px;font-size:19px;line-height:20px">*</div>
<div class="t t13" style="left:1049px;top:302px;"><span class="l13" style="margin-right:-1.6px">En</span></div>
<div class="a" style="left:929px;top:342px;width:106px;height:18px;border:1px solid #c0c0c0;"></div>
<div class="t t13" style="left:1049px;top:342px;"><span class="l13" style="margin-right:-1.6px">S1</span></div>
<div class="t t13 b" style="left:980px;top:342px;">目标频率</div>
<div class="a" style="left:929px;top:382px;width:106px;height:18px;border:1px solid #c0c0c0;"></div>
<div class="t t13" style="left:1049px;top:382px;"><span class="l13" style="margin-right:-1.6px">S2</span></div>
<div class="t t13 b" style="left:1025px;top:382px;"><span class="l13" style="margin-right:-0.8px">1</span></div>
<div class="a" style="left:1179px;top:342px;width:106px;height:18px;border:1px solid #c0c0c0;"></div>
<div class="t t13" style="left:1156px;top:342px;"><span class="l13" style="margin-right:-0.8px">D</span></div>
<div class="t t13 b" style="left:1182px;top:342px;">目标频率<span class="l13" style="margin-right:-0.8px">1</span></div>
<div class="t" style="left:1100px;top:424px;font-size:19px;line-height:20px">*</div>
<div class="t t13" style="left:1049px;top:442px;"><span class="l13" style="margin-right:-1.6px">En</span></div>
<div class="a" style="left:929px;top:482px;width:106px;height:18px;border:1px solid #c0c0c0;"></div>
<div class="t t13" style="left:1049px;top:482px;"><span class="l13" style="margin-right:-1.6px">S1</span></div>
<div class="t t13 b" style="left:980px;top:482px;">目标频率</div>
<div class="a" style="left:929px;top:522px;width:106px;height:18px;border:1px solid #c0c0c0;"></div>
<div class="t t13" style="left:1049px;top:522px;"><span class="l13" style="margin-right:-1.6px">S2</span></div>
<div class="t t13 b" style="left:1018px;top:522px;"><span class="l13" style="margin-right:-1.6px">-1</span></div>
<div class="a" style="left:1179px;top:482px;width:106px;height:18px;border:1px solid #c0c0c0;"></div>
<div class="t t13" style="left:1156px;top:482px;"><span class="l13" style="margin-right:-0.8px">D</span></div>
<div class="t t13 b" style="left:1182px;top:482px;">目标频率<span class="l13" style="margin-right:-0.8px">1</span></div>
<div class="t t13" style="left:1091px;top:563px;"><span class="l13" style="margin-right:-3.2px">DJOG</span></div>
<div class="t t13" style="left:1049px;top:582px;"><span class="l13" style="margin-right:-1.6px">En</span></div>
<div class="a" style="left:929px;top:622px;width:106px;height:18px;border:1px solid #c0c0c0;"></div>
<div class="t t13" style="left:1049px;top:622px;"><span class="l13" style="margin-right:-1.6px">S1</span></div>
<div class="t t13 b" style="left:980px;top:622px;">加速时间</div>
<div class="a" style="left:929px;top:662px;width:106px;height:18px;border:1px solid #c0c0c0;"></div>
<div class="t t13" style="left:1049px;top:662px;"><span class="l13" style="margin-right:-1.6px">S2</span></div>
<div class="t t13 b" style="left:973px;top:662px;">目标频率<span class="l13" style="margin-right:-0.8px">1</span></div>
<div class="a" style="left:929px;top:702px;width:106px;height:18px;border:1px solid #c0c0c0;"></div>
<div class="t t13" style="left:1049px;top:702px;"><span class="l13" style="margin-right:-1.6px">S3</span></div>
<div class="t t13 b" style="left:980px;top:702px;">减速时间</div>
<div class="a" style="left:1179px;top:622px;width:106px;height:18px;border:1px solid #c0c0c0;"></div>
<div class="t t13" style="left:1149px;top:622px;"><span class="l13" style="margin-right:-1.6px">D1</span></div>
<div class="t t13 b" style="left:1182px;top:622px;">轴脉冲输出</div>
<div class="a" style="left:1179px;top:662px;width:106px;height:18px;border:1px solid #c0c0c0;"></div>
<div class="t t13" style="left:1149px;top:662px;"><span class="l13" style="margin-right:-1.6px">D2</span></div>
<div class="t t13 b" style="left:1182px;top:662px;">轴方向输出</div>
<svg class="a" style="left:0;top:0" width="1509" height="943" viewBox="0 0 1509 943" shape-rendering="crispEdges"><rect x="307" y="311" width="66" height="1" fill="#000"/><rect x="373" y="300" width="2" height="21" fill="#000"/><rect x="396" y="300" width="2" height="21" fill="#000"/><path d="M377 319L393 303" stroke="#000" stroke-width="1.2"/><rect x="398" y="311" width="95" height="1" fill="#000"/><rect x="493" y="300" width="2" height="21" fill="#000"/><rect x="516" y="300" width="2" height="21" fill="#000"/><rect x="518" y="311" width="95" height="1" fill="#000"/><rect x="613" y="300" width="2" height="21" fill="#000"/><rect x="636" y="300" width="2" height="21" fill="#000"/><path d="M617 319L633 303" stroke="#000" stroke-width="1.2"/><rect x="638" y="311" width="216" height="1" fill="#000"/><rect x="854" y="300" width="2" height="21" fill="#000"/><rect x="877" y="300" width="2" height="21" fill="#000"/><rect x="879" y="311" width="167" height="1" fill="#000"/><rect x="689.5" y="301.5" width="114" height="18" fill="none" stroke="#000" stroke-width="1"/><rect x="689.5" y="301.5" width="114" height="18" fill="none" stroke="#ff0000" stroke-width="1" stroke-dasharray="3 3"/><rect x="807" y="311" width="1" height="341" fill="#000"/><rect x="807" y="451" width="47" height="1" fill="#000"/><rect x="854" y="440" width="2" height="21" fill="#000"/><rect x="877" y="440" width="2" height="21" fill="#000"/><rect x="879" y="451" width="167" height="1" fill="#000"/><rect x="807" y="591" width="47" height="1" fill="#000"/><rect x="854" y="580" width="2" height="21" fill="#000"/><rect x="877" y="580" width="2" height="21" fill="#000"/><rect x="879" y="591" width="167" height="1" fill="#000"/><rect x="807" y="651" width="47" height="1" fill="#000"/><rect x="854" y="640" width="2" height="21" fill="#000"/><rect x="877" y="640" width="2" height="21" fill="#000"/><rect x="879" y="651" width="49" height="1" fill="#000"/><rect x="927" y="591" width="1" height="61" fill="#000"/><rect x="307" y="816" width="510" height="1" fill="#000"/><rect x="816" y="806" width="2" height="21" fill="#000"/><rect x="1047" y="281" width="119" height="119" fill="none" stroke="#000" stroke-width="2"/><rect x="1035" y="351" width="11" height="1" fill="#000"/><rect x="1035" y="391" width="11" height="1" fill="#000"/><rect x="1167" y="351" width="12" height="1" fill="#000"/><rect x="1047" y="421" width="119" height="119" fill="none" stroke="#000" stroke-width="2"/><rect x="1035" y="491" width="11" height="1" fill="#000"/><rect x="1035" y="531" width="11" height="1" fill="#000"/><rect x="1167" y="491" width="12" height="1" fill="#000"/><rect x="1047" y="561" width="119" height="159" fill="none" stroke="#000" stroke-width="2"/><rect x="1035" y="631" width="11" height="1" fill="#000"/><rect x="1035" y="671" width="11" height="1" fill="#000"/><rect x="1035" y="711" width="11" height="1" fill="#000"/><rect x="1167" y="631" width="12" height="1" fill="#000"/><rect x="1167" y="671" width="12" height="1" fill="#000"/></svg>
<div class="a" style="left:1481px;top:221px;width:17px;height:630px;background:#f8f8f8;"></div>
<div class="a" style="left:1481px;top:221px;width:17px;height:17px;background:#f0f0f0;border:1px solid;border-color:#fff #696969 #696969 #fff;box-shadow:inset -1px -1px 0 #a0a0a0;"></div>
<div class="a" style="left:1481px;top:834px;width:17px;height:17px;background:#f0f0f0;border:1px solid;border-color:#fff #696969 #696969 #fff;box-shadow:inset -1px -1px 0 #a0a0a0;"></div>
<div class="a" style="left:1481px;top:238px;width:17px;height:526px;background:#f0f0f0;border:1px solid;border-color:#fff #696969 #696969 #fff;box-shadow:inset -1px -1px 0 #a0a0a0;"></div>
<svg class="a" style="left:1485px;top:227px;" width="8" height="5" viewBox="0 0 8 5"><path d="M0 4.5L4 0L8 4.5Z" fill="#000"/></svg>
<svg class="a" style="left:1485px;top:840px;" width="8" height="5" viewBox="0 0 8 5"><path d="M0 0L4 4.5L8 0Z" fill="#000"/></svg>
<div class="a" style="left:1498px;top:220px;width:1px;height:648px;background:#a0a0a0;"></div>
<div class="a" style="left:1499px;top:76px;width:1px;height:792px;background:#e3e3e3;"></div>
<div class="a" style="left:306px;top:851px;width:1192px;height:16px;background:#f0f0f0;"></div>
<div class="a" style="left:500px;top:858px;width:857px;height:2px;background:#868686;"></div>
<div class="a" style="left:305px;top:867px;width:1195px;height:1px;background:#a0a0a0;"></div>
<div class="a" style="left:0px;top:871px;width:1509px;height:1px;background:#a0a0a0;"></div>
<div class="t t13" style="left:0px;top:874px;">编译信息</div>
<div class="a" style="left:0px;top:890px;width:1509px;height:1px;background:#a0a0a0;"></div>
<div class="a" style="left:0px;top:893px;width:1509px;height:1px;background:#a0a0a0;"></div>
<div class="a" style="left:0px;top:894px;width:1509px;height:1px;background:#696969;"></div>
<div class="a" style="left:0px;top:895px;width:1509px;height:44px;background:#fff;"></div>
<div class="a" style="left:16px;top:897px;width:1493px;height:17px;background:#f0f0f0;"></div>
<svg class="a" style="left:0px;top:898px;" width="15" height="15" viewBox="0 0 15 15"><path d="M1.5 1.5L13.5 13.5M13.5 1.5L1.5 13.5" stroke="#e8401c" stroke-width="3.4" stroke-linecap="round"/><path d="M2 2L13 13M13 2L2 13" stroke="#ff7a50" stroke-width="1.2" stroke-linecap="round"/></svg>
<div class="t" style="left:17px;top:899px;">错误，位置<span class="l" style="margin-right:-9.6px"> [FB_JOG</span>，区段编号<span class="l" style="margin-right:-6px"> : 1]</span>，错误代码<span class="l" style="margin-right:-8.4px"> : 1003</span>，指令检查错误，错误指令<span class="l" style="margin-right:-8.4px"> : DJOG</span>，错误指令<span class="l" style="margin-right:-8.4px"> : DJOG</span></div>
<svg class="a" style="left:2px;top:918px;" width="9" height="8" viewBox="0 0 9 8"><path d="M0.8 4L3.3 6.8L8.2 1" fill="none" stroke="#000" stroke-width="1.8"/></svg>
<div class="t" style="left:17px;top:916px;"><span class="l" style="margin-right:-2.4px">1 </span>错误</div>
<svg class="a" style="left:2px;top:935px;" width="9" height="8" viewBox="0 0 9 8"><path d="M0.8 4L3.3 6.8L8.2 1" fill="none" stroke="#000" stroke-width="1.8"/></svg>
<div class="t" style="left:17px;top:933px;"><span class="l" style="margin-right:-2.4px">0 </span>警告</div>
<div class="a" style="left:0px;top:939px;width:1509px;height:4px;background:#f0f0f0;"></div>
<div class="a" style="left:1500px;top:76px;width:3px;height:792px;background:linear-gradient(#f6f6f6,#a0a0a0);"></div>
<div class="a" style="left:1503px;top:77px;width:8px;height:19px;background:#f0f0f0;border:1px solid #a0a0a0;"></div>
<svg class="a" style="left:1506px;top:82px;" width="6" height="10" viewBox="0 0 6 10"><path d="M1 3H6M2 3V9H6M3.5 1H6" fill="none" stroke="#000" stroke-width="1.4"/></svg>
<div class="a" style="left:1504px;top:102px;width:8px;height:19px;background:#f4f4f4;border:1px solid #b0b0b0;"></div>
<div class="a" style="left:1505px;top:124px;width:8px;height:716px;background:#fff;border:1px solid #696969;"></div>
<div class="a" style="left:1504px;top:839px;width:6px;height:25px;background:#fff;border-top:2px solid #a8d0f4;"></div>
<div class="a" style="left:1505px;top:842px;width:6px;height:21px;background:#cce4f7;border:1px solid #0078d7;"></div>
<div class="a" style="left:1504px;top:694px;width:2px;height:5px;background:#000;"></div>
<div class="a" style="left:1489px;top:176px;width:20px;height:518px;background:#2c2c2c;"></div>
<div class="a" style="left:1498px;top:212px;width:11px;height:36px;background:#a04a2c;overflow:hidden"><div class="a" style="left:2px;top:10px;width:16px;height:24px;border-radius:50%;background:#e6c05a"></div><div class="a" style="left:8px;top:14px;width:6px;height:8px;border-radius:50%;background:#f8ecd0"></div><div class="a" style="left:2px;top:3px;width:4px;height:6px;border:1px solid #6a3a10;border-radius:2px;background:#c08030"></div></div>
<div class="a" style="left:1505px;top:277px;width:14px;height:14px;background:#07c160;border-radius:50%;"></div>
<svg class="a" style="left:1504px;top:327px;" width="6" height="8" viewBox="0 0 6 8"><path d="M5 1L1 5H5" fill="none" stroke="#9a9a9a" stroke-width="1.2"/></svg>
<div class="a" style="left:1506px;top:361px;width:6px;height:12px;border:1.5px solid #9a9a9a;border-radius:2px;"></div>
<div class="a" style="left:1506px;top:394px;width:6px;height:20px;border:1.5px solid #9a9a9a;border-radius:1px;"></div>
<div class="a" style="left:1506px;top:437px;width:8px;height:16px;border:1.5px solid #9a9a9a;border-radius:6px;"></div>
<div class="a" style="left:1506px;top:479px;width:8px;height:16px;border:1.5px solid #9a9a9a;border-radius:6px;"></div>
<div class="a" style="left:1506px;top:576px;width:8px;height:14px;border:1.5px solid #9a9a9a;border-radius:6px;"></div>
<div class="a" style="left:1507px;top:656px;width:4px;height:12px;border-top:1.5px solid #9a9a9a;border-left:1.5px solid #9a9a9a;"></div>
<svg class="a" style="left:0;top:0" width="1509" height="943" viewBox="0 0 1509 943"><path d="M806.5 723.5L808 725L619.5 890.5L620.5 893.5L602 897L608 880L612 883.5Z" fill="#ff2018"/></svg>
<div class="a" style="left:812px;top:702px;font:23px/26px 'Liberation Sans',sans-serif;color:#ff2018;transform:scaleX(.82);transform-origin:0 50%">?</div>
</body></html>
